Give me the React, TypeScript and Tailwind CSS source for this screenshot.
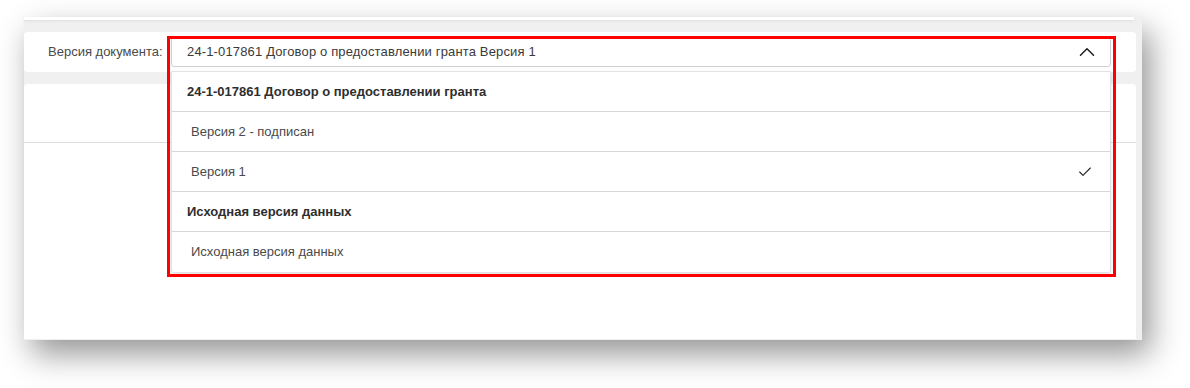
import { Check, ChevronUp } from "lucide-react";

const options = [
    { label: "24-1-017861 Договор о предоставлении гранта", group: true },
    { label: "Версия 2 - подписан" },
    { label: "Версия 1", selected: true },
    { label: "Исходная версия данных", group: true },
    { label: "Исходная версия данных" },
];

export default function App() {
    return (
        <div className="w-[1190px] h-[388px] bg-white overflow-hidden pl-[24px] pt-[17px] font-['Liberation_Sans',sans-serif]">
            <div className="w-[1118px] h-[323px] bg-[#f0f0f0] shadow-[8px_14px_30px_rgba(0,0,0,0.42)] flex flex-col">
                {/* bottom edge of the card above */}
                <div className="w-[1110px] h-[3px] bg-white shadow-[0_1px_3px_rgba(0,0,0,0.08)]" />

                {/* document version row */}
                <div className="mt-[12px] w-[1112px] h-[40px] bg-white rounded-[4px] flex items-center">
                    <span className="ml-[24px] w-[123px] text-[13px] text-[#4a4a4a]">Версия документа:</span>
                    <div className="relative">
                        <div className="w-[940px] h-[30px] border border-[#cfcfcf] rounded-[3px] flex items-center justify-between pl-[15px] pr-[10px] text-[13px] text-[#3a3a3a]">
                            <span className="tracking-[0.15px]">24-1-017861 Договор о предоставлении гранта Версия 1</span>
                            <ChevronUp size={26} strokeWidth={1.4} className="text-[#222]" />
                        </div>

                        {/* open dropdown */}
                        <div className="absolute z-10 left-0 top-[34px] w-[940px] bg-white rounded-b-[3px] border border-[#e2e2e2] shadow-[0_2px_4px_rgba(0,0,0,0.12)]">
                            {options.map((o, i) => (
                                <div
                                    key={i}
                                    className={
                                        o.group
                                            ? "h-[40px] flex items-center pl-[15px] pr-[14px] text-[13px] font-bold text-[#2e2e2e] border-b border-[#d8d8d8] last:border-b-0"
                                            : "h-[40px] flex items-center justify-between pl-[19px] pr-[17px] text-[13px] text-[#4a4a4a] border-b border-[#d8d8d8] last:border-b-0"
                                    }
                                >
                                    <span>{o.label}</span>
                                    {o.selected && <Check size={16} strokeWidth={1.6} className="text-[#222]" />}
                                </div>
                            ))}
                        </div>

                        {/* red annotation frame */}
                        <div className="absolute z-20 left-[-4px] top-[-1px] w-[949px] h-[241px] border-[3px] border-[#ff0000] pointer-events-none" />
                    </div>
                </div>

                {/* content card */}
                <div className="mt-[12px] w-[1112px] h-[255px] bg-white rounded-t-[4px] flex flex-col">
                    <div className="h-[59px] border-b border-[#dcdcdc]" />
                    <div className="flex-1" />
                </div>
            </div>
        </div>
    );
}
